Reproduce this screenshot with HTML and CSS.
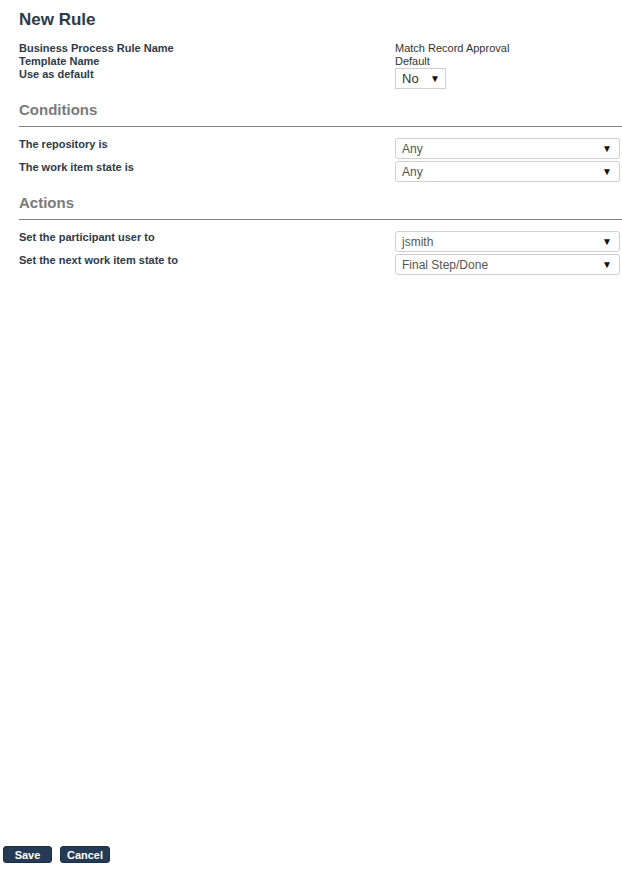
FILE: index.html
```html
<!DOCTYPE html>
<html lang="en">
<head>
    <meta charset="UTF-8">
    <title>New Rule</title>
    <link rel="stylesheet" href="styles.css">
</head>
<body>
    <div class="page">
        <div class="content">
            <h1 class="title">New Rule</h1>

            <div class="info">
                <div class="row">
                    <div class="label">Business Process Rule Name</div>
                    <div class="value">Match Record Approval</div>
                </div>
                <div class="row">
                    <div class="label">Template Name</div>
                    <div class="value">Default</div>
                </div>
                <div class="row">
                    <div class="label">Use as default</div>
                    <div class="value">
                        <div class="select select-small">
                            <span class="select-text">No</span>
                            <span class="select-arrow">&#9660;</span>
                        </div>
                    </div>
                </div>
            </div>

            <div class="section">
                <h2 class="section-title">Conditions</h2>
                <div class="rule-row">
                    <div class="label">The repository is</div>
                    <div class="select">
                        <span class="select-text">Any</span>
                        <span class="select-arrow">&#9660;</span>
                    </div>
                </div>
                <div class="rule-row">
                    <div class="label">The work item state is</div>
                    <div class="select">
                        <span class="select-text">Any</span>
                        <span class="select-arrow">&#9660;</span>
                    </div>
                </div>
            </div>

            <div class="section">
                <h2 class="section-title">Actions</h2>
                <div class="rule-row">
                    <div class="label">Set the participant user to</div>
                    <div class="select">
                        <span class="select-text">jsmith</span>
                        <span class="select-arrow">&#9660;</span>
                    </div>
                </div>
                <div class="rule-row">
                    <div class="label">Set the next work item state to</div>
                    <div class="select">
                        <span class="select-text">Final Step/Done</span>
                        <span class="select-arrow">&#9660;</span>
                    </div>
                </div>
            </div>
        </div>

        <div class="footer">
            <button class="btn">Save</button>
            <button class="btn">Cancel</button>
        </div>
    </div>
</body>
</html>
```

FILE: styles.css
```css
* {
    margin: 0;
    padding: 0;
    box-sizing: border-box;
}

body {
    font-family: 'Liberation Sans', Arial, sans-serif;
    background: white;
    color: #2e3a48;
}

.page {
    min-height: 100vh;
    display: flex;
    flex-direction: column;
}

.content {
    padding: 10px 0 0 19px;
}

.title {
    font-size: 17px;
    line-height: 20px;
    font-weight: bold;
    color: #2b3a4c;
    margin-bottom: 12px;
}

.row,
.rule-row {
    display: grid;
    grid-template-columns: 376px 225px;
}

.label {
    font-size: 11px;
    line-height: 13px;
    font-weight: bold;
    color: #2e3a48;
}

.value {
    font-size: 11px;
    line-height: 13px;
    color: #333;
}

.select {
    height: 21px;
    border: 1px solid #cfcfcf;
    border-radius: 3px;
    background: white;
    display: flex;
    align-items: center;
    justify-content: space-between;
    padding: 0 7px 0 6px;
    font-size: 12px;
    color: #555;
}

.select-small {
    width: 51px;
    border-radius: 0;
    font-size: 13px;
    color: #333;
    padding-right: 5px;
}

.select-arrow {
    font-size: 10px;
    color: #111;
}

.rule-row + .rule-row {
    margin-top: 2px;
}

.section {
    margin-top: 12px;
}

.section-title {
    font-size: 15px;
    line-height: 18px;
    font-weight: bold;
    color: #7a7a7a;
    padding-bottom: 7px;
    border-bottom: 1px solid #808080;
    margin-bottom: 11px;
}

.footer {
    margin-top: auto;
    padding: 0 0 20px 3px;
    display: flex;
    gap: 8px;
}

.btn {
    height: 17px;
    padding: 0;
    border: 1px solid #1d2f44;
    border-radius: 3px;
    background: #253b55;
    color: white;
    font-family: 'Liberation Sans', Arial, sans-serif;
    font-size: 11px;
    font-weight: bold;
    cursor: pointer;
}

.btn:first-child {
    width: 49px;
}

.btn:last-child {
    width: 50px;
}
```
